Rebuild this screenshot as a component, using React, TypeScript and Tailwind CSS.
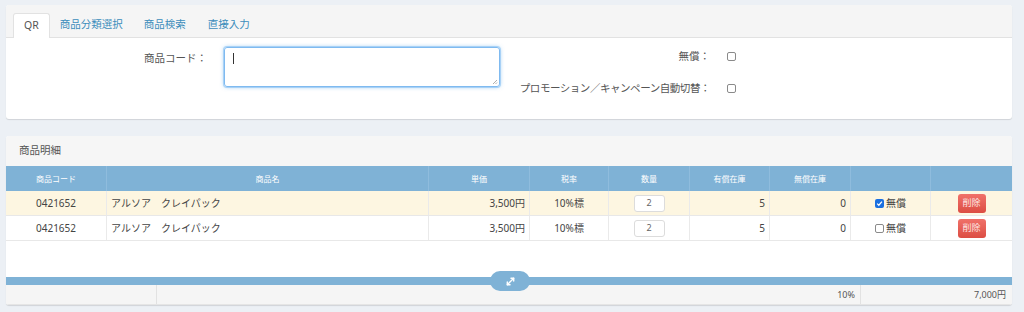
import { MoveDiagonal } from "lucide-react";

const cols =
  "grid grid-cols-[101px_322px_101px_79px_81px_80px_81px_80px_1fr]";

const rows = [
  { bg: "bg-[#fdf6e1]", checked: true },
  { bg: "bg-white", checked: false },
];

function Box() {
  return (
    <span className="inline-block w-[9px] h-[9px] rounded-[2px] border border-[#8a8a8a] bg-white" />
  );
}

export default function App() {
  return (
    <div className="w-[1024px] h-[312px] overflow-hidden bg-[#ecf0f5] pl-[6px] pr-[12px] pt-[5px] font-['Noto_Sans','Noto_Sans_CJK_JP',sans-serif] text-[#555]">

      {/* ── Top card: tabs + entry form ─────────────────────────────── */}
      <div className="h-[114px] bg-white rounded-[3px] shadow-[0_1px_1px_rgba(0,0,0,0.12)] overflow-hidden">
        <div className="h-[33px] bg-[#f5f5f5] border-b border-[#e2e2e2] flex items-end pl-[7px] text-[10.5px]">
          <div className="h-[25px] -mb-px px-[10px] flex items-center bg-white border border-b-0 border-[#e2e2e2] rounded-t-[3px] text-[#555]">
            QR
          </div>
          <div className="h-[25px] px-[10px] flex items-center text-[#3c8dbc]">商品分類選択</div>
          <div className="h-[25px] px-[11px] flex items-center text-[#3c8dbc]">商品検索</div>
          <div className="h-[25px] px-[11px] flex items-center text-[#3c8dbc]">直接入力</div>
        </div>

        <div className="flex pt-[9px] text-[10.5px]">
          {/* left: product code */}
          <div className="flex">
            <div className="w-[201px] text-right pt-[4px]">商品コード：</div>
            <div className="ml-[17px] relative w-[276px] h-[40px] border border-[#7fbaf0] rounded-[3px] shadow-[0_0_0_1px_rgba(140,195,245,0.6),0_0_4px_rgba(102,175,233,0.7)]">
              <span className="absolute left-[8px] top-[5px] w-px h-[11px] bg-[#333]" />
              <svg className="absolute right-[1px] bottom-[1px]" width="6" height="6" viewBox="0 0 6 6">
                <path d="M5 1 1 5M5 3.5 3.5 5" stroke="#999" strokeWidth="0.8" />
              </svg>
            </div>
          </div>

          {/* right: flags */}
          <div className="flex flex-col gap-[16px] pt-[2px]">
            <div className="flex items-center">
              <div className="w-[210px] text-right">無償：</div>
              <div className="ml-[17px] flex items-center"><Box /></div>
            </div>
            <div className="flex items-center">
              <div className="w-[210px] text-right whitespace-nowrap tracking-[-0.45px]">プロモーション／キャンペーン自動切替：</div>
              <div className="ml-[17px] flex items-center"><Box /></div>
            </div>
          </div>
        </div>
      </div>

      {/* ── Detail card ─────────────────────────────────────────────── */}
      <div className="mt-[17px] bg-white rounded-[3px] shadow-[0_1px_1px_rgba(0,0,0,0.12)] overflow-hidden">
        <div className="h-[30px] bg-[#f6f6f6] flex items-center px-[13px] text-[10.5px] text-[#555]">
          商品明細
        </div>

        {/* table header */}
        <div className={`${cols} h-[25px] bg-[#7fb2d6] text-white text-[8px]`}>
          {["商品コード", "商品名", "単価", "税率", "数量", "有償在庫", "無償在庫", "", ""].map((h, i) => (
            <div key={i} className={`flex items-center justify-center ${i < 8 ? "border-r border-[#8fbcdd]" : ""}`}>
              {h}
            </div>
          ))}
        </div>

        {/* table rows */}
        {rows.map((r, i) => (
          <div key={i} className={`${cols} h-[25px] ${r.bg} text-[10px] text-[#444] border-b border-[#e8e8e8]`}>
            <div className="flex items-center justify-center border-r border-[#eaeaea]">0421652</div>
            <div className="flex items-center pl-[4px] border-r border-[#eaeaea]">アルソア　クレイパック</div>
            <div className="flex items-center justify-end pr-[4px] border-r border-[#eaeaea]">3,500円</div>
            <div className="flex items-center justify-center border-r border-[#eaeaea]">10%標</div>
            <div className="flex items-center justify-center border-r border-[#eaeaea]">
              <div className="w-[31px] h-[17px] flex items-center justify-center bg-white border border-[#dcdcdc] rounded-[3px] text-[9px] text-[#666]">2</div>
            </div>
            <div className="flex items-center justify-end pr-[4px] border-r border-[#eaeaea]">5</div>
            <div className="flex items-center justify-end pr-[4px] border-r border-[#eaeaea]">0</div>
            <div className="flex items-center justify-center gap-[2px] border-r border-[#eaeaea]">
              {r.checked ? (
                <span className="w-[9px] h-[9px] rounded-[2px] bg-[#1a6fe0] flex items-center justify-center">
                  <svg width="7" height="7" viewBox="0 0 8 8">
                    <path d="M1.3 4.2 3.2 6 6.8 1.8" stroke="white" strokeWidth="1.4" fill="none" />
                  </svg>
                </span>
              ) : (
                <Box />
              )}
              <span>無償</span>
            </div>
            <div className="flex items-center justify-center">
              <div className="w-[28px] h-[19px] flex items-center justify-center rounded-[3px] bg-gradient-to-b from-[#f07169] to-[#dc4d43] text-[#fde6e4] text-[9px]">
                削除
              </div>
            </div>
          </div>
        ))}

        <div className="h-[36px]" />

        {/* resize bar */}
        <div className="relative h-[8px] bg-[#7fb2d6]">
          <div className="absolute left-[484px] -top-[6px] w-[40px] h-[20px] rounded-full bg-[#7fb2d6] flex items-center justify-center">
            <MoveDiagonal size={11} color="white" strokeWidth={3} />
          </div>
        </div>

        {/* totals */}
        <div className="grid grid-cols-[151px_704px_1fr] h-[20px] bg-[#f5f5f5] text-[9px] text-[#555] border-b border-[#e5e5e5]">
          <div className="border-r border-[#e2e2e2]" />
          <div className="flex items-center justify-end pr-[5px] border-r border-[#e2e2e2]">10%</div>
          <div className="flex items-center justify-end pr-[6px]">7,000円</div>
        </div>
      </div>
    </div>
  );
}
